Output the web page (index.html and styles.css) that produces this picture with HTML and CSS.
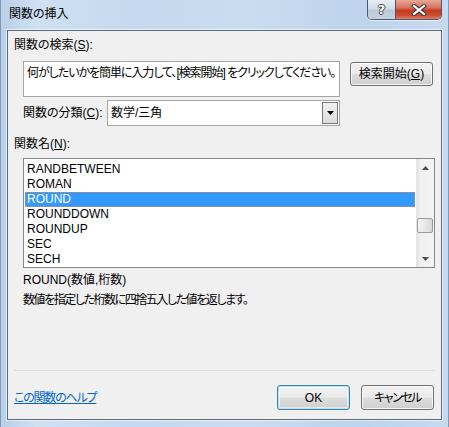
FILE: index.html
```html
<!DOCTYPE html>
<html lang="ja">
<head>
<meta charset="utf-8">
<title>関数の挿入</title>
<link rel="stylesheet" href="styles.css">
</head>
<body>
<div class="window">
  <div class="titlebar">
    <span class="title">関数の挿入</span>
    <div class="caption-btns">
      <div class="cbtn help"><span class="qmark">?</span></div>
      <div class="cbtn close">
        <svg width="16" height="12" viewBox="0 0 16 12">
          <path d="M3 2 L13 10 M13 2 L3 10" stroke="#3a3a3a" stroke-width="4.2" stroke-linecap="square" fill="none"/>
          <path d="M3 2 L13 10 M13 2 L3 10" stroke="#ffffff" stroke-width="2.2" stroke-linecap="square" fill="none"/>
        </svg>
      </div>
    </div>
  </div>
  <div class="client">
    <div class="label first">関数の検索(<u>S</u>):</div>
    <div class="search-row">
      <div class="textbox">何がしたいかを簡単に入力して、[検索開始] をクリックしてください。</div>
      <button class="btn search-btn">検索開始(<u>G</u>)</button>
    </div>
    <div class="cat-row">
      <span class="cat-label">関数の分類(<u>C</u>):</span>
      <div class="combo">
        <span class="combo-text">数学/三角</span>
        <div class="drop">
          <svg width="7" height="4" viewBox="0 0 7 4"><path d="M0 0 H7 L3.5 4 Z" fill="#000"/></svg>
        </div>
      </div>
    </div>
    <div class="label names">関数名(<u>N</u>):</div>
    <div class="list">
      <div class="items">
        <div class="item">RANDBETWEEN</div>
        <div class="item">ROMAN</div>
        <div class="item selected">ROUND</div>
        <div class="item">ROUNDDOWN</div>
        <div class="item">ROUNDUP</div>
        <div class="item">SEC</div>
        <div class="item">SECH</div>
      </div>
      <div class="scrollbar">
        <div class="arrow up"><svg width="7" height="4" viewBox="0 0 7 4"><path d="M0 4 H7 L3.5 0 Z" fill="#4d4d4d"/></svg></div>
        <div class="track"><div class="thumb"></div></div>
        <div class="arrow down"><svg width="7" height="4" viewBox="0 0 7 4"><path d="M0 0 H7 L3.5 4 Z" fill="#4d4d4d"/></svg></div>
      </div>
    </div>
    <div class="desc syntax">ROUND(数値,桁数)</div>
    <div class="desc text">数値を指定した桁数に四捨五入した値を返します。</div>
    <div class="sep"></div>
    <div class="footer">
      <a class="help-link" href="#">この関数のヘルプ</a>
      <div class="footer-btns">
        <button class="btn default">OK</button>
        <button class="btn cancel">キャンセル</button>
      </div>
    </div>
  </div>
</div>
</body>
</html>
```
FILE: styles.css
```css
html, body {
  margin: 0;
  padding: 0;
}
body {
  width: 449px;
  height: 427px;
  overflow: hidden;
  font-family: "Liberation Sans", "Noto Sans CJK JP", sans-serif;
  font-size: 12px;
  color: #000;
  font-feature-settings: "palt";
}
.window {
  width: 449px;
  height: 427px;
  box-sizing: border-box;
  background: linear-gradient(90deg, #b9d0e8 0%, #cfe0f2 8%, #c4d9ef 30%, #cadcf0 55%, #bdd4ec 80%, #c6daef 100%);
  display: flex;
  flex-direction: column;
  border-left: 1px solid #7d9abb;
  border-right: 1px solid #7d9abb;
}
.titlebar {
  height: 30px;
  display: flex;
  justify-content: space-between;
  align-items: flex-start;
  padding: 0 6px 0 8px;
}
.title {
  margin-top: 6px;
  line-height: 16px;
  font-size: 12px;
  color: #000;
}
.caption-btns {
  display: flex;
  border: 1px solid #4b5a6c;
  border-top: none;
  border-radius: 0 0 5px 5px;
  overflow: hidden;
  height: 19px;
  box-shadow: 0 1px 0 rgba(255,255,255,0.6);
}
.cbtn {
  height: 19px;
  display: flex;
  align-items: center;
  justify-content: center;
}
.help {
  width: 27px;
  background: linear-gradient(180deg, #e7edf4 0%, #d3dde9 45%, #b9c8d8 55%, #c6d3e1 100%);
  border-right: 1px solid #4b5a6c;
}
.qmark {
  font-family: "DejaVu Sans", sans-serif;
  font-weight: bold;
  font-size: 13px;
  line-height: 13px;
  color: #fff;
  text-shadow: 1px 0 0 #444, -1px 0 0 #444, 0 1px 0 #444, 0 -1px 0 #444;
}
.close {
  width: 45px;
  background: linear-gradient(180deg, #e9a799 0%, #d9735f 40%, #c5381f 55%, #cf4a2e 80%, #e0806a 100%);
}
.client {
  margin-left: 6px;
  width: 435px;
  height: 390px;
  box-sizing: border-box;
  background: #f0f0f0;
  border: 1px solid #5d6b7a;
  box-shadow: 0 0 0 1px rgba(255,255,255,0.55);
  padding: 0 6px;
  display: flex;
  flex-direction: column;
}
.label {
  line-height: 16px;
}
.label.first {
  margin-top: 6px;
}
.search-row {
  margin-top: 8px;
  margin-left: 9px;
  display: flex;
  align-items: flex-start;
}
.textbox {
  width: 317px;
  height: 36px;
  box-sizing: border-box;
  background: #fff;
  border: 1px solid #a5a5a5;
  padding: 3px 0 0 3px;
  line-height: 16px;
  white-space: nowrap;
  overflow: hidden;
  letter-spacing: -1.05px;
}
.btn {
  font-family: "Liberation Sans", "Noto Sans CJK JP", sans-serif;
  font-feature-settings: "palt";
  font-size: 12px;
  color: #000;
  height: 24px;
  box-sizing: border-box;
  border: 1px solid #707070;
  border-radius: 3px;
  background: linear-gradient(180deg, #f2f2f2 0%, #ebebeb 49%, #dddddd 51%, #cfcfcf 100%);
  box-shadow: inset 0 0 0 1px rgba(255,255,255,0.75);
  padding: 0;
  line-height: 20px;
  text-align: center;
}
.search-btn {
  margin-left: 10px;
  margin-top: 1px;
  width: 83px;
}
.cat-row {
  margin-top: 3px;
  margin-left: 9px;
  display: flex;
  align-items: center;
  height: 26px;
}
.cat-label {
  width: 84px;
  line-height: 16px;
}
.combo {
  width: 233px;
  height: 26px;
  box-sizing: border-box;
  background: #fff;
  border: 1px solid #a5a5a5;
  display: flex;
  align-items: center;
  justify-content: space-between;
  padding: 0 1px 0 3px;
}
.combo-text {
  line-height: 16px;
}
.drop {
  width: 16px;
  height: 22px;
  box-sizing: border-box;
  border: 1px solid #7a7a7a;
  background: linear-gradient(180deg, #f0f0f0, #dcdcdc);
  display: flex;
  align-items: center;
  justify-content: center;
}
.label.names {
  margin-top: 10px;
}
.list {
  margin-top: 6px;
  margin-left: 9px;
  width: 412px;
  height: 110px;
  box-sizing: border-box;
  border: 1px solid #828790;
  background: #fff;
  display: flex;
}
.items {
  flex: 1;
  padding: 3px 1px 0 1px;
}
.item {
  height: 15px;
  line-height: 15px;
  padding-left: 2px;
  box-sizing: border-box;
  white-space: nowrap;
}
.item.selected {
  background: #3399ff;
  color: #fff;
  outline: 1px dotted #d08a4a;
  outline-offset: -1px;
}
.scrollbar {
  width: 17px;
  display: flex;
  flex-direction: column;
  background: linear-gradient(90deg, #e3e3e3 0%, #f0f0f0 20%, #f4f4f4 100%);
  border-left: 1px solid #e6e6e6;
}
.arrow {
  height: 17px;
  display: flex;
  align-items: center;
  justify-content: center;
}
.track {
  flex: 1;
  position: relative;
}
.thumb {
  position: absolute;
  left: 0;
  right: 1px;
  top: 42px;
  height: 15px;
  box-sizing: border-box;
  border: 1px solid #9a9a9a;
  border-radius: 2px;
  background: linear-gradient(90deg, #f3f3f3 0%, #e8e8e8 50%, #d7d7d7 100%);
}
.desc {
  line-height: 20px;
  margin-left: 9px;
}
.desc.syntax {
  margin-top: 2px;
}
.desc.text {
  letter-spacing: -1.45px;
}
.sep {
  margin-top: 60px;
  height: 1px;
  background: #d5dfe5;
}
.footer {
  margin-top: 14px;
  display: flex;
  justify-content: space-between;
  align-items: center;
  padding-right: 1px;
}
.help-link {
  color: #0066cc;
  text-decoration: underline;
  line-height: 16px;
  letter-spacing: -1.2px;
}
.footer-btns {
  display: flex;
  gap: 11px;
}
.footer-btns .btn {
  width: 73px;
  height: 25px;
}
.btn.cancel {
  letter-spacing: -1.5px;
}
.btn.default {
  border-color: #3c7fb1;
  box-shadow: inset 0 0 0 1px #b7e3f8, inset 0 0 0 2px rgba(255,255,255,0.5);
}
```
